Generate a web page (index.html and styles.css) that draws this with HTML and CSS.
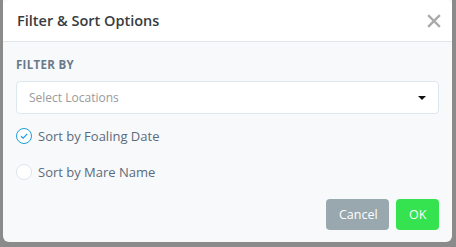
FILE: index.html
```html
<!DOCTYPE html>
<html lang="en">
<head>
  <meta charset="UTF-8" />
  <title>Filter &amp; Sort Options</title>
  <link rel="stylesheet" href="styles.css">
</head>
<body>

  <div class="modal">
    <div class="modal-header">
      <h2>Filter &amp; Sort Options</h2>
      <button class="close" aria-label="Close">
        <svg width="14" height="14" viewBox="0 0 14 14"><path d="M2 2 L12 12 M12 2 L2 12" stroke="#a9a9a9" stroke-width="2.4" stroke-linecap="square"/></svg>
      </button>
    </div>

    <div class="modal-body">
      <div class="label">Filter By</div>
      <div class="select">
        <span>Select Locations</span>
        <span class="caret"></span>
      </div>

      <label class="radio checked">
        <span class="circle">
          <svg width="10" height="10" viewBox="0 0 10 10"><path d="M2 5.2 L4.2 7.2 L8.2 2.8" fill="none" stroke="#1a9fd6" stroke-width="1.2"/></svg>
        </span>
        Sort by Foaling Date
      </label>
      <label class="radio">
        <span class="circle"></span>
        Sort by Mare Name
      </label>

      <div class="actions">
        <button class="btn btn-cancel">Cancel</button>
        <button class="btn btn-ok">OK</button>
      </div>
    </div>
  </div>

</body>
</html>
```

FILE: styles.css
```css
* {
  box-sizing: border-box;
  margin: 0;
  padding: 0;
  font-family: 'Open Sans', sans-serif;
}

body {
  background: #8b8b8b;
  width: 456px;
  height: 247px;
  overflow: hidden;
}

.modal {
  margin-left: 3px;
  width: 449px;
  height: 242px;
  background: #f7f9fb;
  border-radius: 0 0 6px 6px;
  overflow: hidden;
}

.modal-header {
  height: 42px;
  background: #fff;
  border-bottom: 1px solid #dfe6ec;
  display: flex;
  align-items: center;
  justify-content: space-between;
  padding: 0 11px 0 14px;
  border-radius: 6px 6px 0 0;
}

.modal-header h2 {
  font-size: 14.5px;
  font-weight: 600;
  color: #383c40;
}

.close {
  border: none;
  background: none;
  display: flex;
  padding: 0;
  margin-top: 1px;
}

.modal-body {
  padding: 15px 13px 0 13px;
}

.label {
  font-size: 11.5px;
  font-weight: 700;
  color: #69798a;
  text-transform: uppercase;
  letter-spacing: 0.3px;
  line-height: 16px;
}

.select {
  margin-top: 8px;
  height: 33px;
  background: #fff;
  border: 1px solid #dde7ee;
  border-radius: 4px;
  display: flex;
  align-items: center;
  justify-content: space-between;
  padding: 0 12px 0 12px;
  font-size: 12px;
  color: #9a9a9a;
}

.caret {
  width: 0;
  height: 0;
  border-left: 4px solid transparent;
  border-right: 4px solid transparent;
  border-top: 4px solid #111;
  margin-top: 1px;
}

.radio {
  display: flex;
  align-items: center;
  gap: 6px;
  font-size: 13px;
  color: #5b6b7b;
  height: 20px;
}

.radio.checked {
  margin-top: 12px;
}

.radio + .radio {
  margin-top: 16px;
}

.circle {
  width: 16px;
  height: 16px;
  border-radius: 50%;
  border: 1px solid #dce5ec;
  background: #fff;
  display: flex;
  align-items: center;
  justify-content: center;
}

.radio.checked .circle {
  border-color: #1a9fd6;
}

.actions {
  display: flex;
  justify-content: flex-end;
  gap: 7px;
  margin-top: 17px;
}

.btn {
  border: none;
  border-radius: 4px;
  height: 31px;
  color: #fff;
  font-size: 12.5px;
  padding: 0 13px;
}

.btn-cancel {
  background: #98a8ae;
  width: 63px;
}

.btn-ok {
  background: #35e24f;
  width: 43px;
}
```
